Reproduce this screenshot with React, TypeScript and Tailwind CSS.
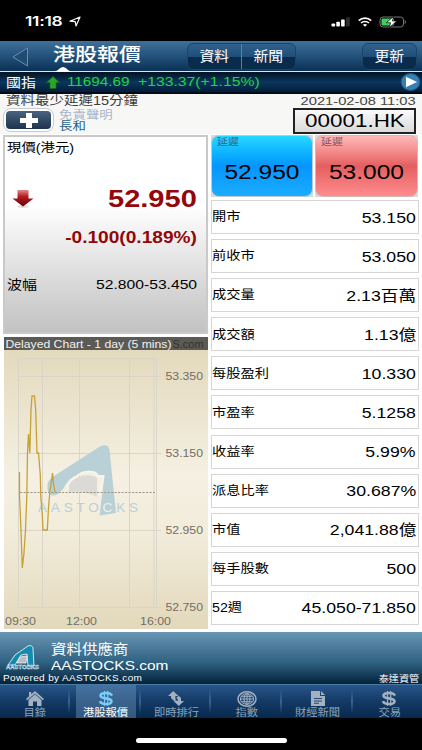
const quotes = [
  { label: '開市', value: '53.150' },
  { label: '前收市', value: '53.050' },
  { label: '成交量', value: '2.13百萬' },
  { label: '成交額', value: '1.13億' },
  { label: '每股盈利', value: '10.330' },
  { label: '市盈率', value: '5.1258' },
  { label: '收益率', value: '5.99%' },
  { label: '派息比率', value: '30.687%' },
  { label: '市值', value: '2,041.88億' },
  { label: '每手股數', value: '500' },
  { label: '52週', value: '45.050-71.850' },
];

export default function App() {
  return (
    <div className="flex h-[750px] w-[422px] flex-col overflow-hidden bg-black font-['Liberation_Sans','Noto_Sans_CJK_TC',sans-serif] whitespace-nowrap text-black">
      <StatusBar />
      <Header />
      <Ticker />
      <main className="flex h-[538px] flex-col bg-white">
        <StockInfo />
        <div className="flex pl-[3px]">
          <div className="flex w-[205px] flex-col gap-[3px] pt-px">
            <PricePanel />
            <DelayedChart />
          </div>
          <QuoteList />
        </div>
      </main>
      <Provider />
      <TabBar />
      <div className="flex h-8 justify-center pt-5">
        <div className="h-[5px] w-[151px] rounded-full bg-white" />
      </div>
    </div>
  );
}

function StatusBar() {
  return (
    <div className="flex h-[41px] shrink-0 items-center justify-between pl-[25px] pr-[15px] pt-[2px] text-white">
      <div className="flex items-center">
        <span className="w-[44px] origin-left scale-x-[1.29] font-[Inter] text-[13.5px] font-semibold leading-none tracking-[-0.2px]">11:18</span>
        <svg width="12" height="11" viewBox="0 0 12 11" fill="none" stroke="#fff" strokeWidth="1.2" strokeLinejoin="round">
          <path d="M1 5.2L11 1L7 10L6.2 5.6Z" />
        </svg>
      </div>
      <div className="flex items-center gap-[7px]">
        <svg width="20" height="10" viewBox="0 0 20 10" fill="#fff">
          <rect x="0.5" y="6.5" width="3.6" height="3" rx="0.8" />
          <rect x="5.3" y="4.7" width="3.6" height="4.8" rx="0.8" />
          <rect x="10.1" y="2.5" width="3.6" height="7" rx="0.8" />
          <rect x="15" y="0.2" width="3.8" height="9.3" rx="0.8" fill="#2d2d2d" />
        </svg>
        <svg width="14" height="10" viewBox="0 0 14 10" fill="none" stroke="#fff">
          <path d="M0.8 3.6C4.2 0.4 9.8 0.4 13.2 3.6" strokeWidth="1.7" />
          <path d="M3 6C5.2 4 8.8 4 11 6" strokeWidth="1.6" />
          <path d="M4.9 7.7C6.2 6.7 7.8 6.7 9.1 7.7L7 9.8Z" fill="#fff" stroke="none" />
        </svg>
        <svg width="28" height="12" viewBox="0 0 28 12">
          <rect x="1" y="1" width="23.5" height="10" rx="3" fill="none" stroke="#777" />
          <rect x="2.5" y="2.4" width="12.5" height="7.2" rx="1.4" fill="#3fcf5f" />
          <path d="M25.7 4V8C27.3 7.4 27.3 4.6 25.7 4Z" fill="#777" />
          <path d="M14.6 0.4L7.4 6.7H11.6L10.4 11.6L17.8 5H13.4Z" fill="#fff" stroke="#000" strokeWidth="0.7" />
        </svg>
      </div>
    </div>
  );
}

function Header() {
  return (
    <header className="relative flex h-[31px] shrink-0 border-b border-[#dfe5ec] bg-linear-to-b from-[#3f719a] via-[#23527b] to-[#0b3156]">
      <svg className="ml-[12px] mt-[6px]" width="17" height="20" viewBox="0 0 17 20" fill="#1f4c72" stroke="#6d8da8">
        <path d="M15.5 1V19L1 10Z" />
      </svg>
      <h1 className="ml-[24px] w-[134px] origin-left scale-x-[1.19] text-[18.5px] font-medium leading-[28px] text-white">港股報價</h1>
      <svg className="absolute left-[54px] top-[26px]" width="18" height="5" viewBox="0 0 18 5" fill="#fff">
        <path d="M0 5C4 4 6 0 9 0S14 4 18 5Z" />
      </svg>
      <div className="mt-[2px] flex h-[27px] w-[109px] rounded-md border border-[#1b4468] bg-linear-to-b from-[#2f618c] via-[#1f4f79] via-50% to-[#092b4c] to-50% text-white">
        <HeaderButton label="資料" className="flex-1 border-r border-[#5582a5]" />
        <HeaderButton label="新聞" className="flex-1" />
      </div>
      <div className="ml-[66px] mt-[2px] flex h-[27px] w-[55px] rounded-md border border-[#1b4468] bg-linear-to-b from-[#2f618c] via-[#1f4f79] via-50% to-[#092b4c] to-50% text-white">
        <HeaderButton label="更新" className="flex-1" />
      </div>
    </header>
  );
}

function HeaderButton({ label, className }: { label: string; className: string }) {
  return (
    <button className={`flex items-center justify-center ${className}`}>
      <span className="scale-x-[1.12] text-[13.2px] leading-none">{label}</span>
    </button>
  );
}

function Ticker() {
  return (
    <div className="flex h-[22px] shrink-0 items-center border-b-2 border-[#020b17] bg-linear-to-b from-[#041322] via-[#0a365d] to-[#041d38] text-[#22d33f]">
      <span className="ml-[6px] w-[40px] origin-left scale-x-[1.15] text-[13px] leading-none text-white">國指</span>
      <svg width="14" height="13" viewBox="0 0 14 13" fill="#29a52b" stroke="#126b18" strokeWidth="0.6">
        <path d="M7 0.5L13.5 6.5H10V12.5H4V6.5H0.5Z" />
      </svg>
      <span className="ml-[7px] w-[71px] origin-left scale-x-[1.22] pt-px text-[12.5px] leading-none">11694.69</span>
      <span className="w-[262px] origin-left scale-x-[1.26] pt-px text-[12.5px] leading-none">+133.37(+1.15%)</span>
      <svg width="21" height="18" viewBox="0 0 21 18">
        <ellipse cx="10.5" cy="9" rx="9.5" ry="8.5" fill="#347fb4" stroke="#175382" />
        <path d="M6 3.8L17 9L6 14.2Z" fill="#fff" />
      </svg>
    </div>
  );
}

function StockInfo() {
  return (
    <div className="flex h-[40px] justify-between bg-[#f7f7f6] pl-[3px] pr-[6px]">
      <div>
        <p className="ml-[3px] h-[14px] origin-left scale-x-[1.17] text-[12.4px] leading-[15px] text-[#3c3c3c]">資料最少延遲15分鐘</p>
        <div className="flex">
          <button className="flex h-[24px] w-[51px] items-center justify-center rounded-lg border-[1.5px] border-[#c4cbd4] bg-white p-[2px]">
            <span className="flex h-full w-full items-center justify-center rounded-[4px] bg-linear-to-b from-[#4a637e] to-[#1c3450]">
              <svg width="18" height="15" viewBox="0 0 18 15" fill="#fff">
                <path d="M6 0H12V5H18V10H12V15H6V10H0V5H6Z" />
              </svg>
            </span>
          </button>
          <div className="ml-[5px] mt-px origin-left scale-x-[1.16] text-[11.6px] leading-[11px]">
            <p className="text-[#a9b8c8]">免責聲明</p>
            <p className="text-[#1f6487]">長和</p>
          </div>
        </div>
      </div>
      <div className="flex flex-col items-end">
        <p className="h-[14px] origin-right scale-x-[1.27] text-[11.6px] leading-[14px] text-[#444]">2021-02-08 11:03</p>
        <div className="flex h-[26px] w-[123px] items-center justify-center border-2 border-[#222] bg-linear-to-b from-[#fafafa] to-[#dadada]">
          <span className="scale-x-[1.22] text-[18.4px] leading-none">00001.HK</span>
        </div>
      </div>
    </div>
  );
}

function PricePanel() {
  return (
    <section className="flex h-[199px] flex-col border-2 border-[#c9c9c9] bg-linear-to-b from-white from-35% to-[#c2c2c2]">
      <p className="ml-[2px] mt-[2px] h-[18px] origin-left scale-x-[1.15] text-[12.5px] leading-[18px]">現價(港元)</p>
      <div className="mt-[29px] flex h-[25px] items-center justify-between pl-[7px] pr-[9px] text-[#930609]">
        <svg width="22" height="20" viewBox="0 0 22 20">
          <defs>
            <linearGradient id="down" x1="0" y1="0" x2="0" y2="1">
              <stop offset="0" stopColor="#e08a8a" />
              <stop offset="0.4" stopColor="#b41a20" />
              <stop offset="1" stopColor="#650308" />
            </linearGradient>
          </defs>
          <ellipse cx="11" cy="17.5" rx="6" ry="1.5" fill="#ddd" />
          <path d="M5.5 1H16.5V9.5H21.5L11 17.5L0.5 9.5H5.5Z" fill="url(#down)" />
        </svg>
        <span className="origin-right scale-x-[1.22] text-[23.8px] font-bold leading-none">52.950</span>
      </div>
      <p className="mr-[9px] mt-[16px] h-[22px] origin-right scale-x-[1.21] self-end text-[15.8px] font-bold leading-[22px] text-[#930609]">-0.100(0.189%)</p>
      <div className="mt-[24px] flex h-[22px] items-center justify-between pl-[2px] pr-[9px]">
        <span className="origin-left scale-x-[1.15] text-[13px] leading-none">波幅</span>
        <span className="origin-right scale-x-[1.16] pt-px text-[13.5px] leading-none">52.800-53.450</span>
      </div>
    </section>
  );
}

const prices = [
  { label: '53.350', y: 39 },
  { label: '53.150', y: 116 },
  { label: '52.950', y: 193 },
  { label: '52.750', y: 270 },
];

const times = [
  { label: '09:30', x: 2 },
  { label: '12:00', x: 63 },
  { label: '16:00', x: 137 },
];

function DelayedChart() {
  return (
    <section className="h-[292px] w-[204px] translate-x-px">
      <svg width="204" height="292" viewBox="4 337 204 292">
        <defs>
          <linearGradient id="sand" x1="0" y1="0" x2="0" y2="1">
            <stop offset="0" stopColor="#e3d9bc" />
            <stop offset="0.45" stopColor="#f5f0e2" />
            <stop offset="0.65" stopColor="#f2ecdb" />
            <stop offset="1" stopColor="#e2d8bb" />
          </linearGradient>
        </defs>
        <rect x="4" y="350" width="204" height="279" fill="url(#sand)" />
        <rect x="4" y="337" width="204" height="13" fill="#5b5a55" />
        <text x="172.5" y="348.3" fontSize="10.5" fill="#33322f" textLength="31" lengthAdjust="spacingAndGlyphs">S.com</text>
        <text x="5.5" y="347.6" fontSize="10.5" fill="#f1f1f1" textLength="166" lengthAdjust="spacingAndGlyphs">Delayed Chart - 1 day (5 mins)</text>

        <g fill="none" stroke="#d9d5c9">
          <path d="M18.5 358.5V607M42.5 358.5V607M79.5 358.5V607M129.5 358.5V607M154 358.5V607M156.5 358.5V607" />
          <path d="M18.5 358.5H156M18.5 376.5H161M18.5 453.5H161M18.5 530.5H161M18.5 607.5H161" />
        </g>

        <g fill="#b9d1d6">
          <path d="M47.5 487C47 482 49 480 54 476L100 446.5C105 444 109 445 109.5 450L116 513L99.5 515.5L104.5 476L98 475C95 470 84 469 77 475C70 477 67 483 63 489C56 498 50 497 47.5 490Z" />
          <path d="M69 492C67 486 71 480 77 478C83 474 93 475 97 478V497C90 493 82 491 69 492Z" fill="#dcdad6" />
          <path d="M68 490C66 484 70 480 76 477C83 470 96 470 98 476H103.5L99 496" fill="none" stroke="#f8f5ec" strokeWidth="1.8" />
          <text x="38" y="511.5" fontSize="13.5" textLength="100" lengthAdjust="spacing">
            <tspan>AASTO</tspan>
            <tspan fill="#e9efea">C</tspan>
            <tspan>KS</tspan>
          </text>
        </g>

        <path d="M20 492.5H155" stroke="#9d978b" strokeDasharray="2.2 1.3" />
        <path
          d="M19.5 472L19.5 496L21 530L22.3 568L24 553L25.5 530L26.8 497L27.5 453L28.5 434L29.8 453L31 410L32 396H34.5L35.7 410L37 453H38.5L40.3 475L40.8 497L42.3 515L43 530H47.3L48.5 508L50 490L51 485L52.5 473L53.5 484L55 492"
          fill="none"
          stroke="#c6a236"
          strokeWidth="1.3"
        />
        <g fontSize="10.8" fill="#726e64">
          {prices.map((price) => (
            <text key={price.label} x="165.5" y={price.y + 341.3} textLength="37.5" lengthAdjust="spacingAndGlyphs">
              {price.label}
            </text>
          ))}
          {times.map((time) => (
            <text key={time.label} x={time.x + 3} y="625.3" textLength="31" lengthAdjust="spacingAndGlyphs">
              {time.label}
            </text>
          ))}
        </g>
      </svg>
    </section>
  );
}

function QuoteList() {
  return (
    <section className="ml-[3px] flex w-[208px] flex-col pt-px">
      <div className="mb-[3px] flex gap-[2px]">
        <div className="h-[62px] w-[102px] bg-[#d9d9d9]">
          <div className="flex h-full flex-col rounded-lg border border-[#b9cbd5] bg-linear-to-b from-[#27d8ff] via-[#0795ff] via-50% to-[#1aacff]">
            <span className="ml-[5px] mt-px origin-left scale-x-[1.15] text-[9.5px] leading-[10px] text-[#2b6a80]">延遲</span>
            <span className="mt-[14px] scale-x-[1.21] text-center text-[20.3px] leading-[22px]">52.950</span>
          </div>
        </div>
        <div className="h-[62px] w-[103px] bg-[#d9d9d9]">
          <div className="flex h-full flex-col rounded-lg border border-[#d5b7b7] bg-linear-to-b from-[#ffb9b9] via-[#e45e60] via-50% to-[#ff8c8e]">
            <span className="ml-[5px] mt-px origin-left scale-x-[1.15] text-[9.5px] leading-[10px] text-[#8b5556]">延遲</span>
            <span className="mt-[14px] scale-x-[1.21] text-center text-[20.3px] leading-[22px]">53.000</span>
          </div>
        </div>
      </div>
      <div className="flex flex-col gap-[5.1px]">
        {quotes.map((quote) => (
          <div key={quote.label} className="flex h-[34px] items-center justify-between border border-[#d6d6d6] bg-white pr-[2px]">
            <span className="origin-left scale-x-[1.14] pt-px text-[12.5px] leading-none">{quote.label}</span>
            <span className="origin-right scale-x-[1.18] text-[15px] leading-none">{quote.value}</span>
          </div>
        ))}
      </div>
    </section>
  );
}

function Provider() {
  return (
    <footer className="flex h-[52px] shrink-0 flex-col bg-linear-to-b from-[#6997b5] via-[#2d607f] via-60% to-[#04233b] text-white">
      <div className="flex h-[41px]">
        <svg className="ml-[5px] mt-[13px]" width="36" height="26" viewBox="0 0 36 26">
          <path d="M3 20L10 10L23 1C26 0 28 1 28 4L29 21H23L22 9L16 10L10 20Z" fill="#128bb0" stroke="#e5eef3" strokeWidth="0.9" />
          <path d="M12 18L15 12L22 11L21 18Z" fill="#b8bcc2" stroke="#fff" strokeWidth="0.7" />
          <text x="1" y="23.5" fontSize="6" fontWeight="bold" fill="#1a86b0" stroke="#e2edf3" strokeWidth="0.4" textLength="33" lengthAdjust="spacingAndGlyphs">AASTOCKS</text>
        </svg>
        <div className="ml-[10px] origin-left scale-x-[1.13]">
          <p className="mt-[9px] text-[13.7px] leading-[17px]">資料供應商</p>
          <p className="text-[13.7px] leading-[15px]">AASTOCKS.com</p>
        </div>
      </div>
      <div className="flex h-[11px] items-center justify-between pl-[3px] pr-[3px] pt-px">
        <span className="origin-left scale-x-[1.22] pt-px text-[8.2px] leading-none tracking-[0.3px]">Powered by AASTOCKS.com</span>
        <span className="origin-right scale-x-[1.15] text-[8.8px] leading-none">泰達資管</span>
      </div>
    </footer>
  );
}

const tabs = [
  { label: '目錄', icon: <HomeIcon /> },
  { label: '港股報價', icon: <DollarIcon active />, active: true },
  { label: '即時排行', icon: <RankIcon /> },
  { label: '指數', icon: <GlobeIcon /> },
  { label: '財經新聞', icon: <NewsIcon /> },
  { label: '交易', icon: <DollarIcon /> },
];

function TabBar() {
  return (
    <nav className="flex h-[34px] shrink-0 overflow-hidden border-t border-[#477aa4] bg-linear-to-b from-[#28568a] via-[#143a66] via-50% to-[#06294d]">
      {tabs.map((tab, index) => (
        <div key={tab.label} className="flex w-[70.8px] shrink-0">
          <button
            className={`mx-[5px] flex flex-1 flex-col items-center pt-[6px] ${tab.active ? 'bg-[#6a94bb]/45 text-white' : 'text-[#8fa2b6]'}`}
          >
            {tab.icon}
            <span className="mt-[2px] scale-x-[1.15] text-[9.8px] leading-[10px]">{tab.label}</span>
          </button>
          {index < tabs.length - 1 && (
            <div className="my-[4px] w-px -translate-x-[1.5px] bg-linear-to-b from-transparent via-[#5d8fbd] to-transparent" />
          )}
        </div>
      ))}
    </nav>
  );
}

function HomeIcon() {
  return (
    <svg width="18" height="15" viewBox="0 0 18 15" fill="#a3b1c1">
      <path d="M9 0L18 8L16.8 9.2L9 2.5L1.2 9.2L0 8L3 5.3V1H5.2V3.3Z" />
      <path d="M9 3.3L15.5 9V15H11V10.5H7V15H2.5V9Z" />
    </svg>
  );
}

function DollarIcon({ active }: { active?: boolean }) {
  return (
    <svg width="16" height="15" viewBox="0 0 16 15" fill="none" stroke={active ? '#79cdf8' : '#a3b1c1'}>
      <path d="M14 4.7C13 2.7 11 2 8 2C4.5 2 2.5 3 2.5 4.7C2.5 8.4 13.5 6.3 13.5 10.2C13.5 12 11.3 13 8 13C4.7 13 2.6 12.2 2 10.2" strokeWidth="2.6" />
      <path d="M6.5 0V15M9.7 0V15" strokeWidth="1.2" />
    </svg>
  );
}

function RankIcon() {
  return (
    <svg width="16" height="15" viewBox="0 0 16 15" fill="#a3b1c1">
      <path d="M5.2 0L10.4 5H7.4V8.2L9 9.8H5.8L3 7V5H0Z" />
      <path d="M10.8 15L16 10H13V7L10.6 4.8L8.4 6.8L9.8 8.4V10H5.6Z" />
    </svg>
  );
}

function GlobeIcon() {
  return (
    <svg width="20" height="16" viewBox="0 0 20 16" className="-mb-px" fill="none" stroke="#a3b1c1">
      <ellipse cx="10" cy="8" rx="9" ry="7.2" strokeWidth="1.5" />
      <ellipse cx="10" cy="8" rx="6.6" ry="5.3" strokeWidth="1" />
      <ellipse cx="10" cy="8" rx="3" ry="5.3" />
      <path d="M3.5 8H16.5M4.5 5.3H15.5M4.5 10.7H15.5M10 2.5V13.5" />
    </svg>
  );
}

function NewsIcon() {
  return (
    <svg width="14" height="15" viewBox="0 0 14 15" fill="#a3b1c1">
      <path d="M0 0H9V5H14V15H0Z" />
      <path d="M10 0L14 4H10Z" />
      <path d="M3 7.5H11M3 10H11M3 12.3H8" stroke="#26486c" strokeWidth="1.1" />
    </svg>
  );
}
